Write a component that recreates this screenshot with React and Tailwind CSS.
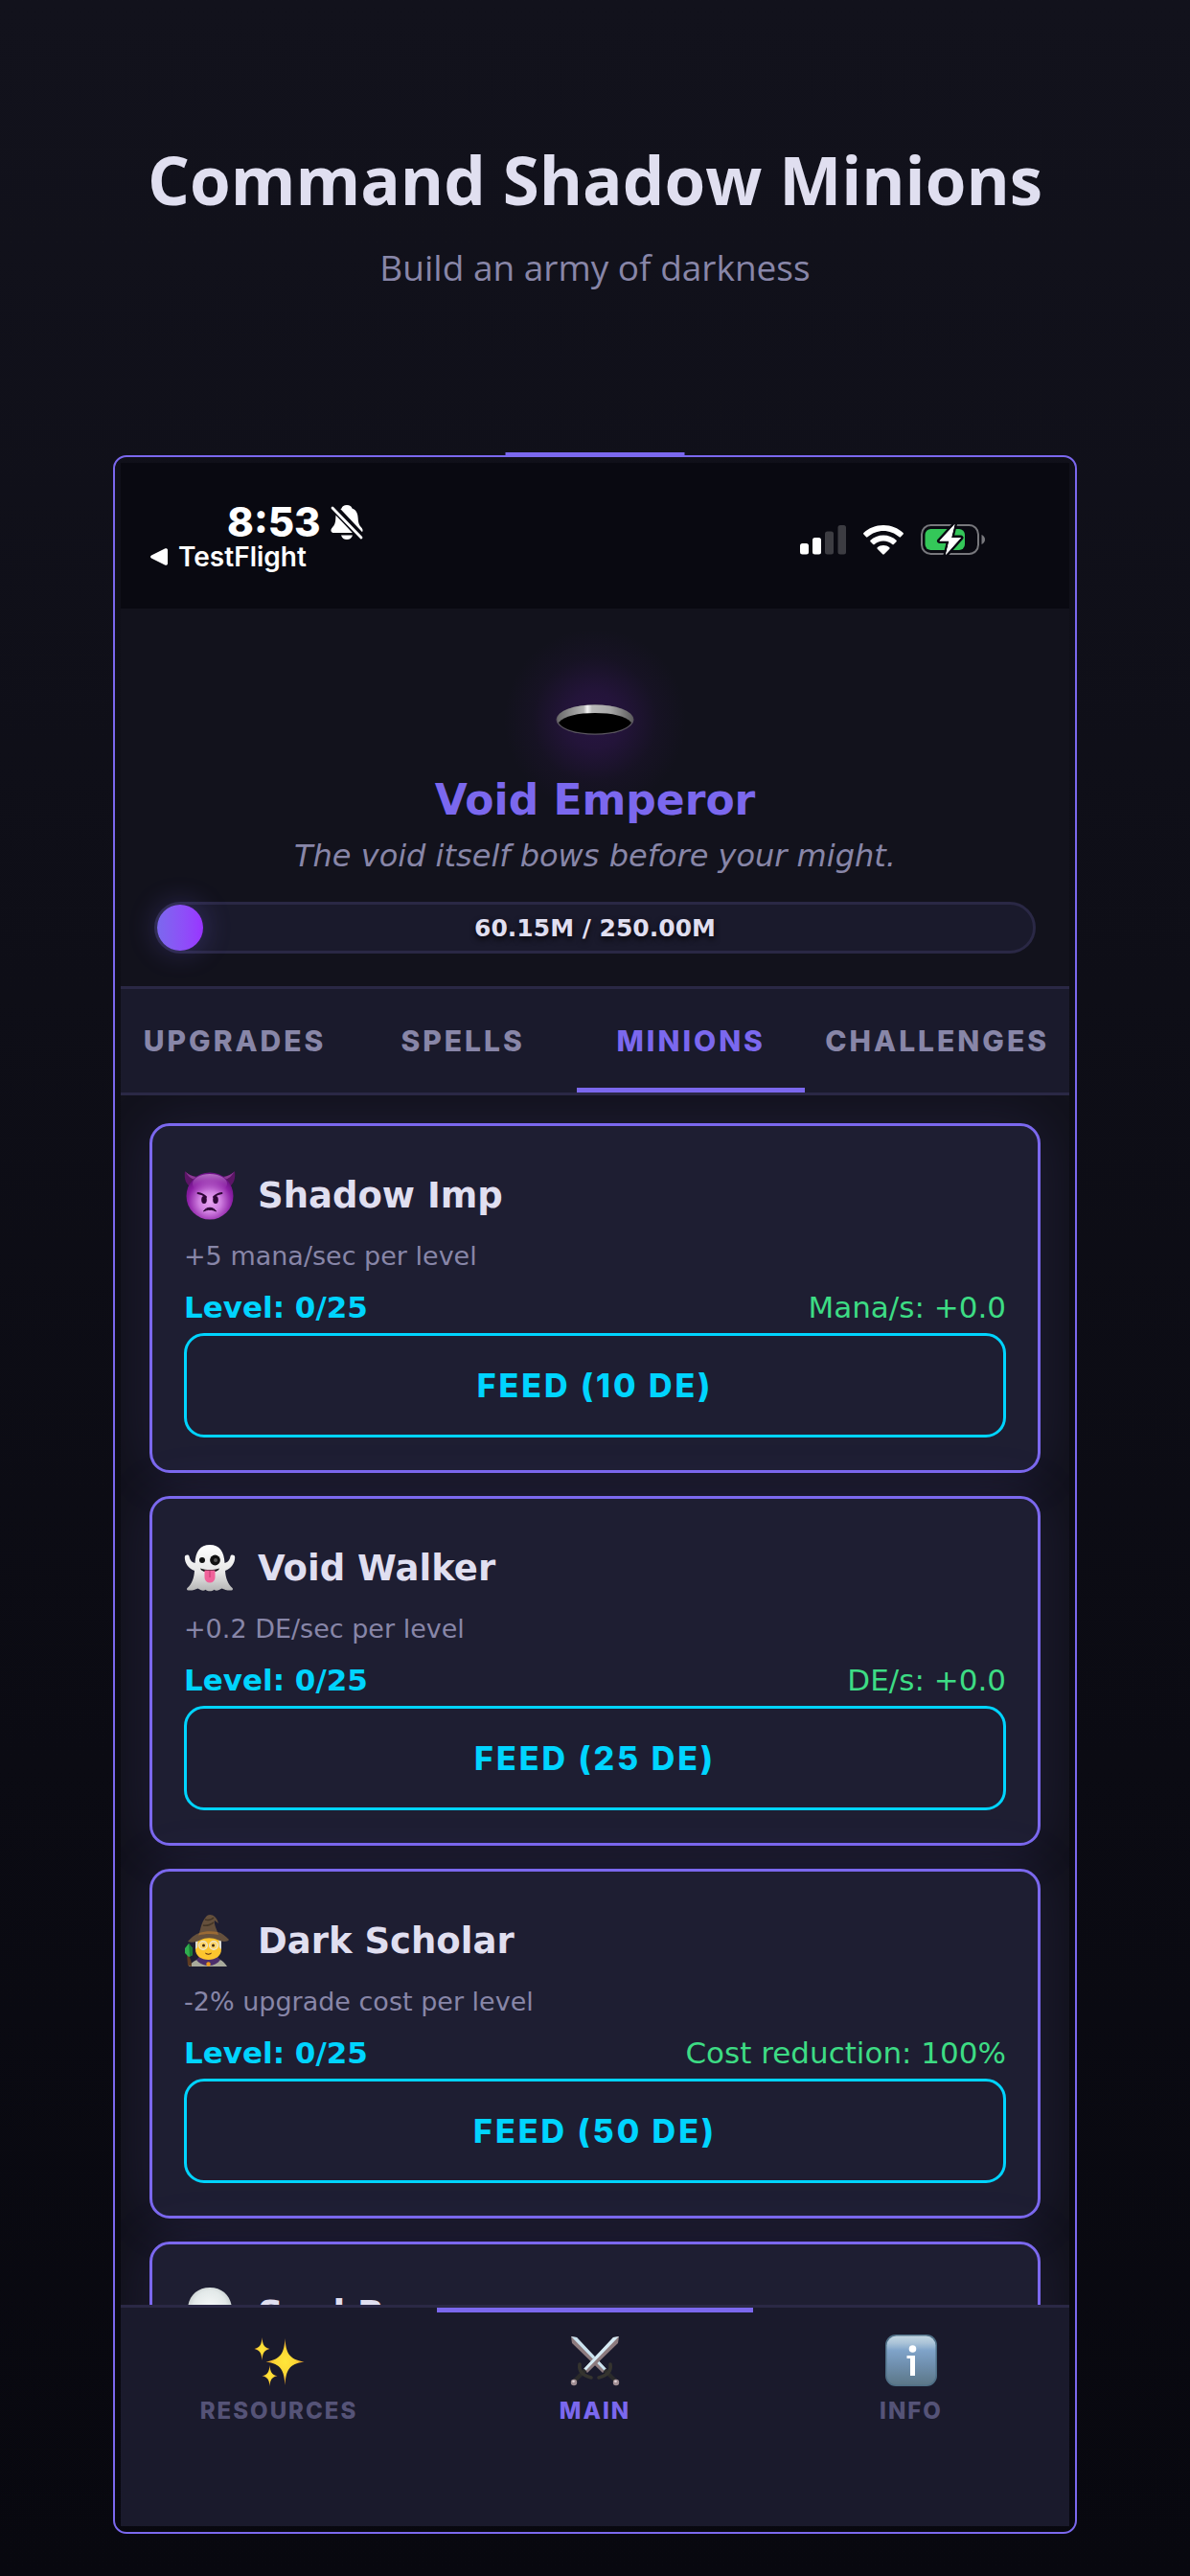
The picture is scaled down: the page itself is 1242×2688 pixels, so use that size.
import { useState } from 'react'
import clsx from 'clsx'

const verdana = "font-[Verdana,'DejaVu_Sans',sans-serif]"
const sans = "font-[Inter,'Liberation_Sans',sans-serif]"
const display = "font-['Open_Sans','Noto_Sans',sans-serif]"

function ImpIcon() {
  return (
    <svg viewBox="0 0 54 52" className="h-[52px] w-[54px]" aria-hidden="true">
      <defs>
        <radialGradient id="impFace" cx="50%" cy="62%" r="58%">
          <stop offset="0" stopColor="#e9a6f2" />
          <stop offset="0.4" stopColor="#cf7fe0" />
          <stop offset="0.8" stopColor="#8d1fa6" />
          <stop offset="1" stopColor="#6d1286" />
        </radialGradient>
        <linearGradient id="impShine" x1="0" y1="0" x2="0" y2="1">
          <stop offset="0" stopColor="#c98ad6" stopOpacity="0.8" />
          <stop offset="1" stopColor="#8d1fa6" stopOpacity="0" />
        </linearGradient>
      </defs>
      <path d="M1 1c-1 8 1 13 5 16L17 7C10 7 5 5 1 1z" fill="#5b1566" />
      <path d="M53 1c1 8-1 13-5 16L37 7c7 0 12-2 16-6z" fill="#5b1566" />
      <path d="M2 2c4 4 9 5.500 14 5l-4 3C7 9 4 6 2 2zM52 2c-4 4-9 5.500-14 5l4 3c5-1 8-4 10-8z" fill="#8b3a94" />
      <circle cx="27" cy="27" r="24.500" fill="url(#impFace)" />
      <ellipse cx="27" cy="14" rx="18" ry="10" fill="url(#impShine)" />
      <path d="M14.500 24c3 .4 6 1.500 8.500 4M39.500 24c-3 .4-6 1.500-8.500 4" stroke="#2e0736" strokeWidth="1.800" strokeLinecap="round" fill="none" />
      <ellipse cx="21" cy="31" rx="2.800" ry="4" fill="#2e0736" />
      <ellipse cx="33" cy="31" rx="2.800" ry="4" fill="#2e0736" />
      <path d="M20.500 43c3-5 10-5 13 0-4-2.200-9-2.200-13 0z" fill="#2e0736" stroke="#2e0736" strokeWidth="1" strokeLinejoin="round" />
    </svg>
  )
}

function GhostIcon() {
  return (
    <svg viewBox="0 0 54 52" className="h-[52px] w-[54px]" aria-hidden="true">
      <defs>
        <linearGradient id="ghostBody" x1="0" y1="0" x2="0" y2="1">
          <stop offset="0" stopColor="#ffffff" />
          <stop offset="0.6" stopColor="#e6e6e6" />
          <stop offset="1" stopColor="#b4b4b4" />
        </linearGradient>
      </defs>
      <path
        d="M27 2C17 2 12 9 11.500 21c-4-1-5.500-4-6-7C5 12 1 12 .8 15c0 6 4 12 10.200 14-.5 8-3 14-7.500 18-1 1-.4 2.500 1 2.500 4 .3 7-.5 10-2 3 2 6 3 8 1.200 2.500 2 6.500 2 9 0 2 1.800 5 .8 8-1.200 3 1.500 6 2.300 10 2 1.400 0 2-1.500 1-2.500-4.500-4-7-10-7.500-18C49.200 27 53.200 21 53.200 15c-.2-3-4.200-3-4.700-1-.5 3-2 6-6 7C42 9 37 2 27 2z"
        fill="url(#ghostBody)"
      />
      <circle cx="19" cy="18" r="3" fill="#111" />
      <circle cx="32.500" cy="18" r="5.400" fill="#111" />
      <circle cx="33" cy="18" r="2" fill="#555" />
      <path d="M17 26.500c6 2 14 2 20 0-1 3-5 4-10 4s-9-1-10-4z" fill="#111" />
      <path d="M21.500 28.500h11V36a5.500 5.500 0 0 1-11 0z" fill="#f0629a" />
      <path d="M27 29v7" stroke="#c93f77" strokeWidth="1.200" />
    </svg>
  )
}

function MageIcon() {
  return (
    <svg viewBox="0 0 54 54" className="h-[54px] w-[54px]" aria-hidden="true">
      <path d="M5 54c3-5 9-8 15-9h12c6 1 10 4 13 9z" fill="#a9ab9c" />
      <path d="M13 47c3 4 8 6 13 6s9-2 12-6l-3-3H16z" fill="#4b2e6b" />
      <circle cx="25.500" cy="51.500" r="2.200" fill="#f09a1a" />
      <path d="M12 22h27v14c0 7-6 11-13.500 11S12 43 12 36z" fill="#fdc52e" />
      <path d="M12 24h3l-1 10-2 2zM39 24h-3l1 10 2 2z" fill="#dcdcd4" />
      <path d="M4 28c5-6 9-8 12-9 2-7 3-13 8-18 4-2.500 10 0 12 8l-4-3c-1 2 1 7 3 12 5 1 8 4 12 8-2 3-8 2-11 .5-7-3-13-3-19 0-4 2-9 3-13 1.500z" fill="#65503c" />
      <path d="M16 19c6-2 13-2 19-1l1 3c-7-1.500-14-1.500-21 .5z" fill="#9a6a35" />
      <path d="M22 5c3 1 7 0 9-2M20 11c4 1 9-1 11-3" stroke="#433526" strokeWidth="1.600" fill="none" />
      <circle cx="20" cy="32" r="4.300" fill="#fff1c4" fillOpacity=".4" stroke="#e8e4d8" strokeWidth="1.200" />
      <circle cx="31" cy="32" r="4.300" fill="#fff1c4" fillOpacity=".4" stroke="#e8e4d8" strokeWidth="1.200" />
      <circle cx="20.500" cy="32" r="1.500" fill="#3b2612" />
      <circle cx="30.500" cy="32" r="1.500" fill="#3b2612" />
      <path d="M22 39.500c2 1.500 5 1.500 7 0-.5 3-6.500 3-7 0z" fill="#5a2c12" />
      <path d="M3 41c3 2 5 7 5 13l-4-1z" fill="#5c3b22" />
      <path d="M5 30l4 5v7l-4 2-4-4v-5z" fill="#2fae4e" />
      <path d="M5 30l1 14 3-2v-7z" fill="#1c7c36" />
    </svg>
  )
}

function SkullIcon() {
  return (
    <svg viewBox="0 0 54 54" className="h-[54px] w-[54px]" aria-hidden="true">
      <defs>
        <radialGradient id="skull" cx="50%" cy="45%" r="55%">
          <stop offset="0" stopColor="#f8fafa" />
          <stop offset="0.7" stopColor="#e3e9e9" />
          <stop offset="1" stopColor="#c3caca" />
        </radialGradient>
      </defs>
      <path d="M27 0C13 0 4 10 4 23c0 6 2 10 6 13l2 8h5v7h20v-7h5l2-8c4-3 6-7 6-13C50 10 41 0 27 0z" fill="url(#skull)" />
      <circle cx="18" cy="28" r="6" fill="#2a2d33" />
      <circle cx="36" cy="28" r="6" fill="#2a2d33" />
      <path d="M27 35l3 6h-6z" fill="#2a2d33" />
    </svg>
  )
}

function SparklesIcon() {
  return (
    <svg viewBox="0 0 54 54" className="h-[54px] w-[54px]" aria-hidden="true">
      <defs>
        <radialGradient id="spark">
          <stop offset="0" stopColor="#ffe63a" />
          <stop offset="0.5" stopColor="#fdd835" />
          <stop offset="1" stopColor="#e59a2c" />
        </radialGradient>
      </defs>
      <path d="M33.500 4c1 15 4 22 20 24.500-16 2-19 9-20 24.500-1-15.500-4-22.500-20-24.500 16-2.500 19-9.500 20-24.500z" fill="url(#spark)" />
      <path d="M9.500 3c.6 7.500 2 10.500 8 12-6 1.500-7.400 4.500-8 12-.6-7.500-2-10.500-8-12 6-1.500 7.400-4.500 8-12z" fill="url(#spark)" />
      <path d="M17.500 32c.6 7 2 9.800 8 11.300-6 1.200-7.400 4-8 10.700-.6-6.700-2-9.500-8-10.700 6-1.500 7.400-4.300 8-11.300z" fill="url(#spark)" />
    </svg>
  )
}

function SwordsIcon() {
  return (
    <svg viewBox="0 0 54 54" className="h-[54px] w-[54px]" aria-hidden="true">
      {/* left-leaning sword sits under the other one */}
      <g>
        <path d="M2 2l6 1 31 33-4 4L3 9z" fill="#8d7b7e" />
        <path d="M2 2l6 1 31 33-2 2z" fill="#c9e2ef" />
        <path d="M37 37l12 12" stroke="#2b2b2b" strokeWidth="4" />
        <path d="M43 31c1 6-1 11-12 14" stroke="#35342f" strokeWidth="3.600" fill="none" strokeLinecap="round" />
        <circle cx="49" cy="50" r="3.200" fill="#a08e93" />
        <circle cx="48.500" cy="49" r="1.300" fill="#ded3d6" />
      </g>
      <g>
        <path d="M52 2l-6 1-31 33 4 4L51 9z" fill="#8d7b7e" />
        <path d="M52 2l-6 1-31 33 2 2z" fill="#d6eaf4" />
        <path d="M17 37L5 49" stroke="#2b2b2b" strokeWidth="4" />
        <path d="M11 31c-1 6 1 11 12 14" stroke="#35342f" strokeWidth="3.600" fill="none" strokeLinecap="round" />
        <circle cx="5" cy="50" r="3.200" fill="#a08e93" />
        <circle cx="4.500" cy="49" r="1.300" fill="#ded3d6" />
      </g>
    </svg>
  )
}

function InfoIcon() {
  return (
    <svg viewBox="0 0 54 54" className="h-[54px] w-[54px]" aria-hidden="true">
      <defs>
        <linearGradient id="infoTile" x1="0" y1="0" x2="0" y2="1">
          <stop offset="0" stopColor="#c3d6e2" />
          <stop offset="0.15" stopColor="#a9c3d8" />
          <stop offset="0.3" stopColor="#7fa3c8" />
          <stop offset="0.6" stopColor="#6f8fae" />
          <stop offset="1" stopColor="#5c7788" />
        </linearGradient>
      </defs>
      <rect width="54" height="54" rx="11" fill="#4f6f86" />
      <rect x="1.500" y="1.500" width="51" height="51" rx="10" fill="url(#infoTile)" />
      <circle cx="28.500" cy="15" r="3.800" fill="#fff" />
      <path d="M22.500 22h8.500v21h-5V25h-3.500z" fill="#fff" />
    </svg>
  )
}

function HoleIcon() {
  return (
    <svg viewBox="0 0 82 32" className="h-8 w-[82px]" aria-hidden="true">
      <defs>
        <linearGradient id="holeRim" x1="0" y1="0" x2="1" y2="0">
          <stop offset="0" stopColor="#6a6a6a" />
          <stop offset="0.35" stopColor="#b4b4b4" />
          <stop offset="0.4" stopColor="#f4f4f4" />
          <stop offset="0.46" stopColor="#b9b9b9" />
          <stop offset="0.7" stopColor="#a8a8a8" />
          <stop offset="1" stopColor="#5c5c5c" />
        </linearGradient>
      </defs>
      <ellipse cx="41" cy="16" rx="40.500" ry="15.800" fill="#5a565f" />
      <ellipse cx="41" cy="15" rx="39.500" ry="14.500" fill="url(#holeRim)" />
      <path d="M3 19C9 12 23 9 41 9s32 3 38 10c-4 7-19 11.500-38 11.500S7 26 3 19z" fill="#000" />
    </svg>
  )
}

function BellOffIcon() {
  return (
    <svg viewBox="0 0 34 38" className="h-[38px] w-[34px]" aria-hidden="true">
      <path
        d="M17 1c-3 0-5 1.500-5.500 3.500C7 6 5.500 10 5.300 15c-.2 5-1.300 7-3.500 9.500C.5 26 .3 27 .5 28c.3 1.500 1.500 2 3 2h27c1.500 0 2.700-.5 3-2 .2-1 0-2-1.300-3.500-2.200-2.500-3.300-4.500-3.500-9.500-.2-5-1.700-9-6.200-10.500C22 2.500 20 1 17 1z"
        fill="#fff"
      />
      <path d="M11 32.500h12c-1 3-3 4.500-6 4.500s-5-1.500-6-4.500z" fill="#fff" />
      <path d="M1 1l33 35" stroke="#090911" strokeWidth="8" />
      <path d="M2 4l30 31" stroke="#fff" strokeWidth="2.800" strokeLinecap="round" />
    </svg>
  )
}

function SignalIcon() {
  return (
    <svg viewBox="0 0 48 32" className="h-8 w-12" aria-hidden="true">
      <rect x="0" y="20" width="9" height="11.500" rx="2.500" fill="#fff" />
      <rect x="13" y="14" width="9" height="17.500" rx="2.500" fill="#fff" />
      <rect x="26" y="7.500" width="9" height="24" rx="2.500" fill="#3c3c42" />
      <rect x="39.500" y="1" width="8.500" height="30.500" rx="2.500" fill="#3c3c42" />
    </svg>
  )
}

function WifiIcon() {
  return (
    <svg viewBox="0 0 42 32" className="h-8 w-[42px]" aria-hidden="true">
      <path d="M21 1C13 1 5.500 4 .4 9c-.5.5-.5 1 0 1.500L3 13.300c.5.500 1 .5 1.500 0C9 9.300 15 7 21 7s12 2.300 16.500 6.300c.5.500 1 .5 1.500 0l2.600-2.800c.5-.5.500-1 0-1.500C36.500 4 29 1 21 1z" fill="#fff" />
      <path d="M21 11.500c-5.200 0-10 2-13.500 5.200-.5.500-.5 1 0 1.500l2.700 2.700c.5.500 1 .5 1.500 0 2.500-2.200 5.700-3.500 9.300-3.500s6.800 1.300 9.300 3.500c.5.500 1 .5 1.500 0l2.700-2.700c.5-.5.500-1 0-1.500C31 13.500 26.200 11.500 21 11.500z" fill="#fff" />
      <path d="M21 22c-2.400 0-4.600.8-6.300 2.200-.5.500-.5 1 0 1.500l5.500 5.600c.5.500 1 .5 1.600 0l5.500-5.600c.5-.5.500-1 0-1.500C25.600 22.800 23.400 22 21 22z" fill="#fff" />
    </svg>
  )
}

function BatteryIcon() {
  return (
    <svg viewBox="0 0 67 34" className="h-[34px] w-[67px]" aria-hidden="true">
      <rect x="1" y="2" width="59" height="30" rx="9.500" fill="none" stroke="#77777c" strokeWidth="2" />
      <path d="M63.500 12v10c2-.8 3.500-2.700 3.500-5s-1.500-4.200-3.500-5z" fill="#77777c" />
      <rect x="4.500" y="6" width="41.500" height="22" rx="6" fill="#34c759" />
      <path d="M35.500 1L19.500 18.500h10L26 33l16-18H32z" fill="#fff" stroke="#090911" strokeWidth="5" strokeLinejoin="round" paintOrder="stroke" />
      <path d="M35.500 1L19.500 18.500h10L26 33l16-18H32z" fill="#fff" />
    </svg>
  )
}

const tabs = [
  { id: 'upgrades', label: 'UPGRADES' },
  { id: 'spells', label: 'SPELLS' },
  { id: 'minions', label: 'MINIONS' },
  { id: 'challenges', label: 'CHALLENGES' }
]

const minions = [
  { id: 'imp', name: 'Shadow Imp', icon: ImpIcon, desc: '+5 mana/sec per level', level: 0, effect: 'Mana/s: +0.0', cost: 10 },
  { id: 'walker', name: 'Void Walker', icon: GhostIcon, desc: '+0.2 DE/sec per level', level: 0, effect: 'DE/s: +0.0', cost: 25 },
  { id: 'scholar', name: 'Dark Scholar', icon: MageIcon, desc: '-2% upgrade cost per level', level: 0, effect: 'Cost reduction: 100%', cost: 50 },
  { id: 'reaper', name: 'Soul Reaper', icon: SkullIcon }
]

const navItems = [
  { id: 'resources', label: 'RESOURCES', icon: SparklesIcon },
  { id: 'main', label: 'MAIN', icon: SwordsIcon },
  { id: 'info', label: 'INFO', icon: InfoIcon }
]

function StatusBar() {
  return (
    <div className={clsx(sans, 'flex h-[152px] shrink-0 items-start justify-between bg-[#090911] pt-[44px] pr-[88px] pl-[31px] text-white')}>
      <div>
        <div className="flex h-9 items-center gap-2.5 pl-20">
          <span className="text-[42px] leading-9 font-extrabold">8:53</span>
          <BellOffIcon />
        </div>
        <a href="#testflight" className="flex h-9 items-center gap-[11px]">
          <svg viewBox="0 0 18 18" className="h-[18px] w-[18px]" aria-hidden="true">
            <path d="M1 7.500L15 .6c1.500-.7 3 0 3 1.500v13.800c0 1.500-1.500 2.200-3 1.500L1 10.500c-1.300-.7-1.300-2.300 0-3z" fill="#fff" />
          </svg>
          <span className="text-[28px] leading-9 font-semibold">TestFlight</span>
        </a>
      </div>
      <div className="flex h-[72px] items-center gap-[18px]">
        <SignalIcon />
        <WifiIcon />
        <BatteryIcon />
      </div>
    </div>
  )
}

function MinionCard({ minion }) {
  const Icon = minion.icon
  return (
    <article className="shrink-0 rounded-[21px] border-[3px] border-[#7b68ee] bg-[#1e1e32] px-[33px] pt-9 pb-[34px] shadow-[0_0_60px_rgba(123,104,238,0.12)]">
      <div className="flex h-[72px] items-center gap-[23px]">
        <Icon />
        <h3 className="pt-0.5 text-[37px] leading-[48px] font-bold text-[#e0dff0]">{minion.name}</h3>
      </div>
      {minion.desc && (
        <>
          <p className="mt-2.5 text-[27px] leading-9 text-[#8886a8]">{minion.desc}</p>
          <div className="mt-[15px] mb-[7px] flex items-center justify-between leading-10">
            <span className="text-[31px] font-bold text-[#00d4ff]">Level: {minion.level}/25</span>
            <span className="text-[31px] text-[#3ddc84]">{minion.effect}</span>
          </div>
          <button className={clsx(sans, 'h-[109px] w-full rounded-[21px] border-[3px] border-[#00d4ff] text-[34px] font-extrabold tracking-[3px] text-[#00d4ff]')}>
            FEED ({minion.cost} DE)
          </button>
        </>
      )}
    </article>
  )
}

export default function App() {
  const [activeTab, setActiveTab] = useState('minions')
  const [activeNav, setActiveNav] = useState('main')
  const mana = 60.15
  const goal = 250

  return (
    <div className="flex h-screen flex-col bg-linear-to-b from-[#12121c] to-[#08080f] px-[118px] pb-11">
      {/* Headline */}
      <header className={clsx(display, 'flex h-[475px] shrink-0 flex-col items-center pt-[137px] text-center')}>
        <h1 className="text-[69px] leading-[100px] font-bold whitespace-nowrap text-[#e0dff0]">Command Shadow Minions</h1>
        <p className="mt-3.5 text-[37px] leading-[56px] text-[#8886a8]">Build an army of darkness</p>
      </header>

      {/* Phone frame */}
      <main className="relative flex min-h-0 flex-1 flex-col rounded-[14px] border-2 border-[#7b68ee] p-1.5">
        <div className="absolute -top-[5px] left-1/2 h-[5px] w-[187px] -translate-x-1/2 bg-[#7b68ee]" />

        <div className={clsx(verdana, 'flex min-h-0 flex-1 flex-col overflow-hidden bg-[#12121c]')}>
          <StatusBar />

          {/* Rank */}
          <section className="flex shrink-0 flex-col items-center bg-[radial-gradient(circle_at_50%_116px,rgba(75,25,125,0.4)_0px,rgba(75,25,125,0.3)_30px,rgba(75,25,125,0.08)_65px,rgba(75,25,125,0)_95px)] px-[35px] pt-[100px] pb-[34px] text-center">
            <HoleIcon />
            <h2 className="mt-10 text-[44px] leading-[56px] font-bold text-[#7b68ee]">Void Emperor</h2>
            <p className="mt-2.5 text-[32px] leading-10 text-[#8886a8] italic">The void itself bows before your might.</p>
            <div className="relative mt-7 h-[54px] w-full rounded-full border-[3px] border-[#2a2845] bg-[#1a1a2c]">
              <div
                className="h-full min-w-12 rounded-full bg-linear-to-r from-[#7b68ee] to-[#9933ff] shadow-[0_0_30px_rgba(123,104,238,0.3)]"
                style={{ width: `${(mana / goal) * 10}%` }}
              />
              <span className="absolute inset-0 flex items-center justify-center pt-0.5 text-[25px] font-bold text-[#e0dff0] [text-shadow:0_3px_6px_rgba(0,0,0,0.8)]">
                {mana.toFixed(2)}M / {goal.toFixed(2)}M
              </span>
            </div>
          </section>

          {/* Tabs */}
          <div role="tablist" className={clsx(sans, 'flex shrink-0 border-y-[3px] border-[#2a2845] bg-[#1a1a2c]')}>
            {tabs.map((tab) => (
              <button
                key={tab.id}
                role="tab"
                aria-selected={activeTab === tab.id}
                onClick={() => setActiveTab(tab.id)}
                className={clsx(
                  'relative h-[108px] flex-1 px-[21px] text-[30px] font-extrabold tracking-[3px]',
                  activeTab === tab.id ? 'text-[#7b68ee]' : 'text-[#8886a8]'
                )}
              >
                {tab.label}
                {activeTab === tab.id && <span className="absolute inset-x-0 bottom-0 h-[5px] bg-[#7b68ee]" />}
              </button>
            ))}
          </div>

          {/* Minion list */}
          <div className="flex min-h-0 flex-1 flex-col gap-6 overflow-hidden px-[30px] pt-[29px]">
            {minions.map((minion) => (
              <MinionCard key={minion.id} minion={minion} />
            ))}
          </div>

          {/* Bottom nav */}
          <nav className={clsx(sans, 'relative flex shrink-0 border-t-[3px] border-[#2a2845] bg-[#1a1a2c] pb-[104px]')}>
            {navItems.map((item) => {
              const Icon = item.icon
              const active = activeNav === item.id
              return (
                <button
                  key={item.id}
                  onClick={() => setActiveNav(item.id)}
                  className={clsx(
                    'relative flex flex-1 flex-col items-center gap-2.5 pt-7 text-[24px] leading-8 font-extrabold tracking-[2px]',
                    active ? 'text-[#7b68ee]' : 'text-[#555377]'
                  )}
                >
                  {active && <span className="absolute inset-x-0 top-0 h-[5px] bg-[#7b68ee]" />}
                  <Icon />
                  {item.label}
                </button>
              )
            })}
          </nav>
        </div>
      </main>
    </div>
  )
}
